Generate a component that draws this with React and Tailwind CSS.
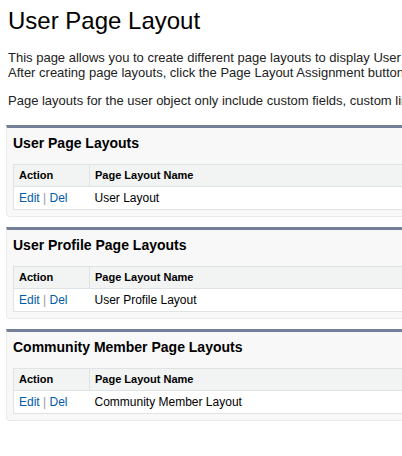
import React from 'react';

const blocks = [
  { title: 'User Page Layouts', layout: 'User Layout' },
  { title: 'User Profile Page Layouts', layout: 'User Profile Layout' },
  { title: 'Community Member Page Layouts', layout: 'Community Member Layout' },
];

const LayoutBlock = ({ title, layout }) => (
  <div className="mb-[10px] ml-[6px] w-[1000px] rounded-b-[4px] border border-t-[3px] border-[#eaeaea] border-t-[#767f98] bg-[#f8f8f8] pb-[6px] pl-[6px]">
    <h2 className="pt-[7px] text-[14px] leading-[17px] font-bold text-black">{title}</h2>
    <table className="mt-[12px] w-full border border-[#e0e3e5] bg-white text-[12px] leading-[15px]">
      <thead>
        <tr className="bg-[#f2f3f3] text-[11px] font-bold text-black">
          <th className="h-[22px] w-[76px] border-b border-[#e0e3e5] pl-[5px] text-left">Action</th>
          <th className="h-[22px] border-b border-l border-[#e0e3e5] pl-[5px] text-left">Page Layout Name</th>
        </tr>
      </thead>
      <tbody>
        <tr>
          <td className="h-[23px] pl-[5px] text-[#015ba7]">
            Edit <span className="text-[#999]">|</span> Del
          </td>
          <td className="h-[23px] pl-[5px] text-black">{layout}</td>
        </tr>
      </tbody>
    </table>
  </div>
);

const App = () => {
  return (
    <div className="h-[456px] w-[402px] overflow-hidden bg-white font-['Liberation_Sans',Arial,sans-serif]">
      <div className="w-[1200px]">
        <h1 className="px-[8px] pt-[7px] text-[24px] leading-[27px] text-black">User Page Layout</h1>

        <div className="mt-[16px] px-[8px] text-[13px] leading-[15px] text-[#222]">
          <p>
            This page allows you to create different page layouts to display User records. You can then assign page layouts to user profiles.
            <br />
            After creating page layouts, click the Page Layout Assignment button to assign them to the appropriate profiles.
          </p>
          <p className="mt-[13px]">
            Page layouts for the user object only include custom fields, custom links, and the standard fields.
          </p>
        </div>

        <div className="mt-[17px]">
          {blocks.map((b) => (
            <LayoutBlock key={b.title} title={b.title} layout={b.layout} />
          ))}
        </div>
      </div>
    </div>
  );
};

export default App;
